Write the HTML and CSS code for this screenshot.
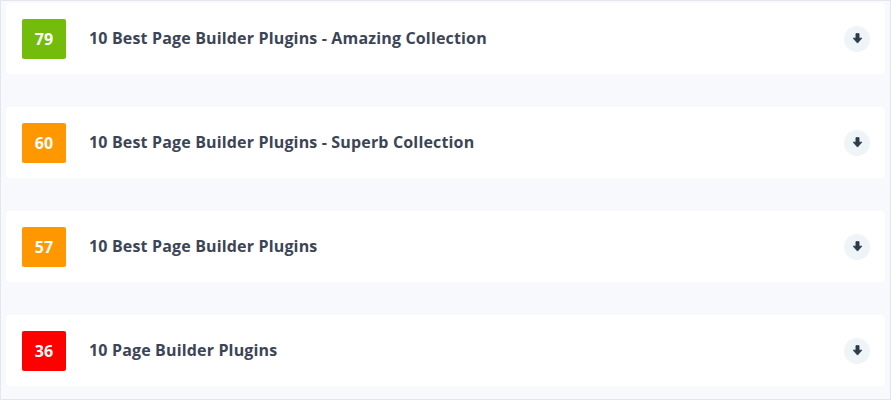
FILE: index.html
```html
<!DOCTYPE html>
<html lang="en">
<head>
    <meta charset="UTF-8">
    <meta name="viewport" content="width=device-width, initial-scale=1.0">
    <title>Headline Variations</title>
    <link rel="stylesheet" href="styles.css">
</head>
<body>
    <!-- Headline list -->
    <div class="headline-list">
        <div class="headline">
            <span class="score score-good">79</span>
            <span class="title">10 Best Page Builder Plugins - Amazing Collection</span>
            <button class="toggle" aria-label="Expand">
                <svg viewBox="0 0 12 12" width="13" height="13"><path d="M4.6 1.5h2.8v4.2h2.6L6 10.2 2 5.7h2.6z" fill="currentColor" stroke="currentColor" stroke-width="0.8" stroke-linejoin="round"/></svg>
            </button>
        </div>
        <div class="headline">
            <span class="score score-ok">60</span>
            <span class="title">10 Best Page Builder Plugins - Superb Collection</span>
            <button class="toggle" aria-label="Expand">
                <svg viewBox="0 0 12 12" width="13" height="13"><path d="M4.6 1.5h2.8v4.2h2.6L6 10.2 2 5.7h2.6z" fill="currentColor" stroke="currentColor" stroke-width="0.8" stroke-linejoin="round"/></svg>
            </button>
        </div>
        <div class="headline">
            <span class="score score-ok">57</span>
            <span class="title">10 Best Page Builder Plugins</span>
            <button class="toggle" aria-label="Expand">
                <svg viewBox="0 0 12 12" width="13" height="13"><path d="M4.6 1.5h2.8v4.2h2.6L6 10.2 2 5.7h2.6z" fill="currentColor" stroke="currentColor" stroke-width="0.8" stroke-linejoin="round"/></svg>
            </button>
        </div>
        <div class="headline">
            <span class="score score-bad">36</span>
            <span class="title">10 Page Builder Plugins</span>
            <button class="toggle" aria-label="Expand">
                <svg viewBox="0 0 12 12" width="13" height="13"><path d="M4.6 1.5h2.8v4.2h2.6L6 10.2 2 5.7h2.6z" fill="currentColor" stroke="currentColor" stroke-width="0.8" stroke-linejoin="round"/></svg>
            </button>
        </div>
    </div>
</body>
</html>
```

FILE: styles.css
```css
body {
    margin: 0;
    padding: 0;
    font-family: 'Open Sans', 'Lato', sans-serif;
    background: #f7f9fd;
}

.headline-list {
    box-sizing: border-box;
    height: 400px;
    padding: 2px 5px;
    border: 1px solid #e3e6ec;
    background: #f7f9fd;
    display: flex;
    flex-direction: column;
    gap: 33px;
}

.headline {
    height: 71px;
    display: flex;
    align-items: center;
    padding: 0 15px 0 16px;
    background: #ffffff;
    border-radius: 4px;
}

.score {
    width: 44px;
    height: 40px;
    border-radius: 2px;
    display: flex;
    align-items: center;
    justify-content: center;
    color: #ffffff;
    font-weight: 700;
    font-size: 16px;
    flex-shrink: 0;
}

.score-good {
    background: #74bc0c;
}

.score-ok {
    background: #ff9800;
}

.score-bad {
    background: #ff0000;
}

.title {
    flex: 1;
    margin-left: 23px;
    margin-bottom: 2px;
    color: #3c4556;
    font-weight: 700;
    font-size: 16px;
    letter-spacing: 0.16px;
}

.toggle {
    width: 26px;
    height: 26px;
    border: none;
    border-radius: 50%;
    background: #eff4f9;
    color: #2e3a4c;
    padding: 0;
    display: flex;
    align-items: center;
    justify-content: center;
    cursor: pointer;
}
```
